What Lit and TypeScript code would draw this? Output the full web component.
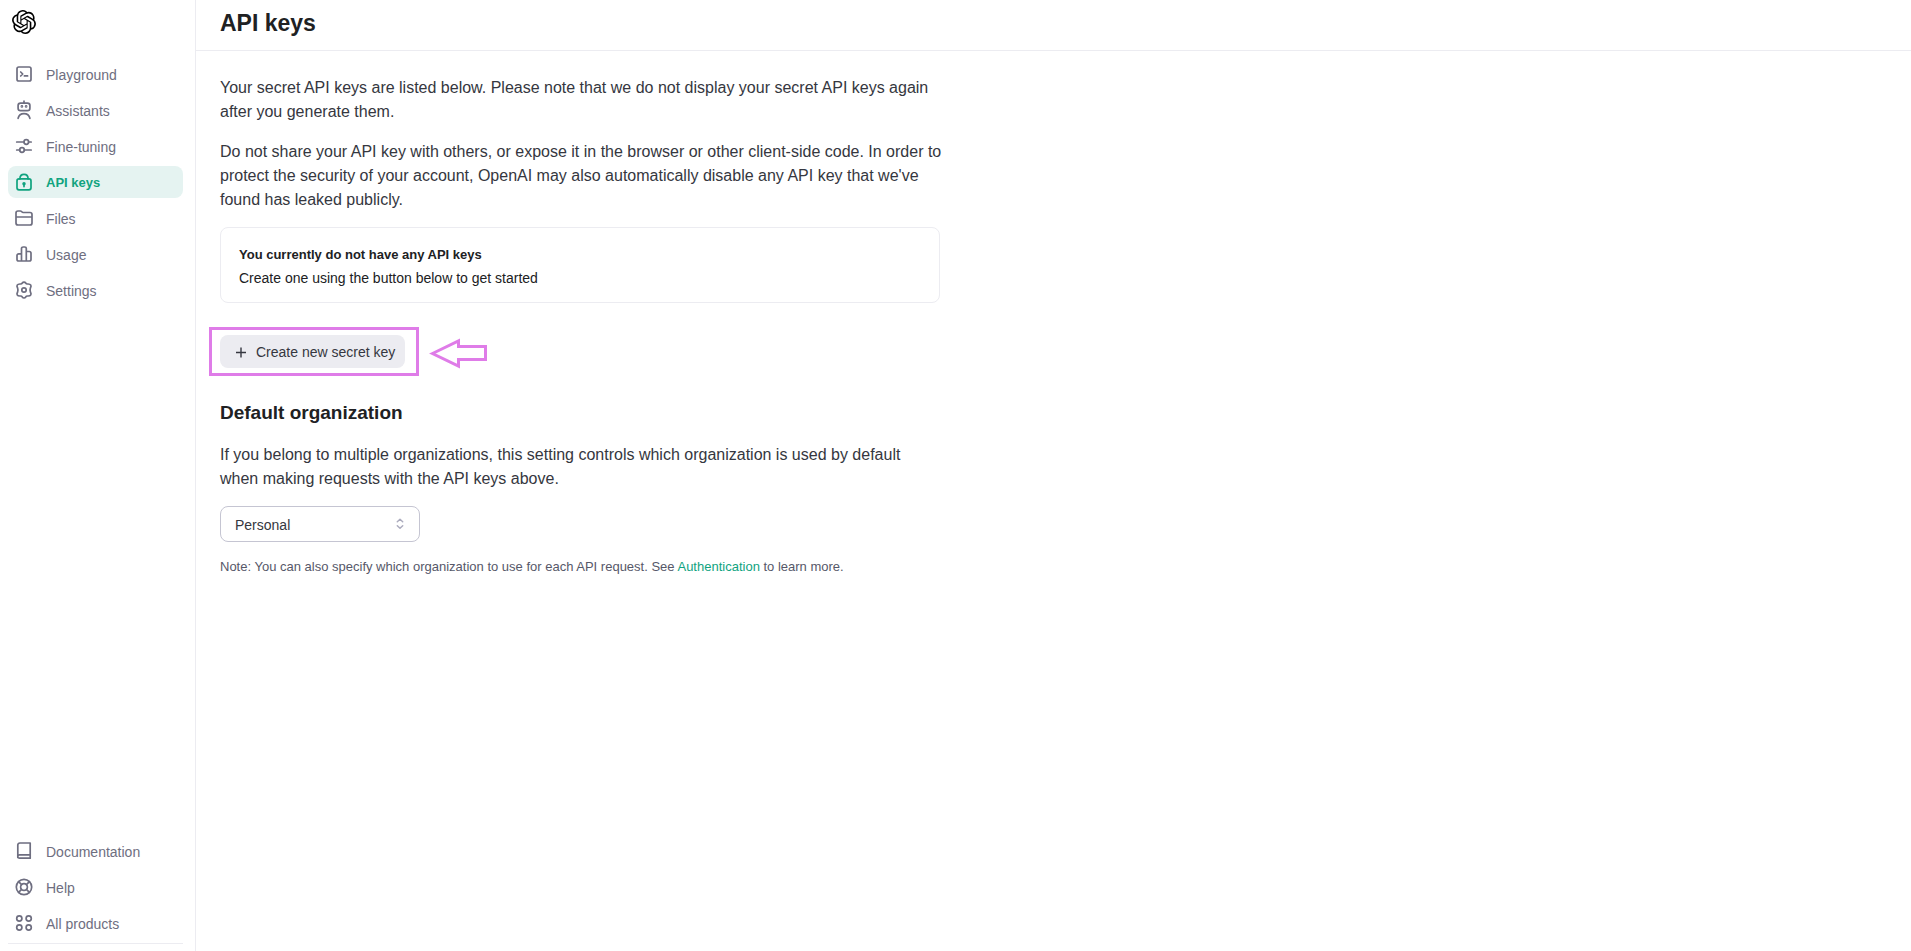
import { LitElement, html, css, svg } from "lit";
import { customElement, state } from "lit/decorators.js";
import { classMap } from "lit/directives/class-map.js";

const LOGO =
  "M22.2819 9.8211a5.9847 5.9847 0 0 0-.5157-4.9108 6.0462 6.0462 0 0 0-6.5098-2.9A6.0651 6.0651 0 0 0 4.9807 4.1818a5.9847 5.9847 0 0 0-3.9977 2.9 6.0462 6.0462 0 0 0 .7427 7.0966 5.98 5.98 0 0 0 .511 4.9107 6.051 6.051 0 0 0 6.5146 2.9001A5.9847 5.9847 0 0 0 13.2599 24a6.0557 6.0557 0 0 0 5.7718-4.2058 5.9894 5.9894 0 0 0 3.9977-2.9001 6.0557 6.0557 0 0 0-.7475-7.0729zm-9.022 12.6081a4.4755 4.4755 0 0 1-2.8764-1.0408l.1419-.0804 4.7783-2.7582a.7948.7948 0 0 0 .3927-.6813v-6.7369l2.02 1.1686a.071.071 0 0 1 .038.052v5.5826a4.504 4.504 0 0 1-4.4945 4.4944zm-9.6607-4.1254a4.4708 4.4708 0 0 1-.5346-3.0137l.142.0852 4.783 2.7582a.7712.7712 0 0 0 .7806 0l5.8428-3.3685v2.3324a.0804.0804 0 0 1-.0332.0615L9.74 19.9502a4.4992 4.4992 0 0 1-6.1408-1.6464zM2.3408 7.8956a4.485 4.485 0 0 1 2.3655-1.9728V11.6a.7664.7664 0 0 0 .3879.6765l5.8144 3.3543-2.0201 1.1685a.0757.0757 0 0 1-.071 0l-4.8303-2.7865A4.504 4.504 0 0 1 2.3408 7.872zm16.5963 3.8558L13.1038 8.364 15.1192 7.2a.0757.0757 0 0 1 .071 0l4.8303 2.7913a4.4944 4.4944 0 0 1-.6765 8.1042v-5.6772a.79.79 0 0 0-.407-.667zm2.0107-3.0231l-.142-.0852-4.7735-2.7818a.7759.7759 0 0 0-.7854 0L9.409 9.2297V6.8974a.0662.0662 0 0 1 .0284-.0615l4.8303-2.7866a4.4992 4.4992 0 0 1 6.6802 4.66zM8.3065 12.863l-2.02-1.1638a.0804.0804 0 0 1-.038-.0567V6.0742a4.4992 4.4992 0 0 1 7.3757-3.4537l-.142.0805L8.704 5.459a.7948.7948 0 0 0-.3927.6813zm1.0976-2.3654l2.602-1.4998 2.6069 1.4998v2.9994l-2.5974 1.4997-2.6067-1.4997Z";

const icons: Record<string, unknown> = {
  playground: svg`<rect x="3" y="3" width="14" height="14" rx="1.8"/><path d="M6.7 8l2 2-2 2M10.4 11.9h3.2"/>`,
  assistants: svg`<rect x="4.1" y="3.1" width="11.8" height="7.6" rx="2.4"/><path d="M10 1.2v1.9M4.1 18.3c.7-2.9 3-4.6 5.9-4.6s5.2 1.7 5.9 4.6"/><circle cx="7.9" cy="6.4" r=".5"/><circle cx="12.1" cy="6.4" r=".5"/>`,
  tuning: svg`<path d="M2.700 6h7.300M14.600 6h2.600M2.700 14h3M10.300 14h6.900"/><circle cx="12.300" cy="6" r="2.300"/><circle cx="8" cy="14" r="2.300"/>`,
  keys: svg`<rect x="3" y="6.900" width="14" height="10.900" rx="2"/><path d="M5.900 6.900c0-2.700 1.600-4.500 4.100-4.500s4.100 1.800 4.100 4.500M10 12v2.600"/><circle cx="10" cy="11.700" r=".9" fill="currentColor"/>`,
  files: svg`<path d="M2 5a2 2 0 0 1 2-2h2.400c1.300 0 1.400 1.500 2.700 1.500H16a2 2 0 0 1 2 2V15a2 2 0 0 1-2 2H4a2 2 0 0 1-2-2zM2 9h16"/>`,
  usage: svg`<path d="M7.500 17V4.600C7.500 3.600 8.300 3 9.200 3h1.400c1 0 1.700.6 1.700 1.600V17zM7.500 9.900H4.700C3.700 9.900 3 10.500 3 11.500v3.900C3 16.400 3.700 17 4.700 17h2.800M12.300 7.500h3c1 0 1.700.7 1.700 1.700v6.200c0 1-.7 1.600-1.700 1.600h-3"/>`,
  settings: svg`<path d="M8.300 3c.8-1.300 2.600-1.300 3.400 0 .4.700 1.100 1.100 1.900 1 1.500-.1 2.700.3 3.200 1.200.5.900.3 1.600-.4 2.800-.5 1.400-.5 2.600 0 4 .7 1.200.9 1.900.4 2.800-.5.900-1.700 1.300-3.200 1.200-.8-.1-1.500.3-1.900 1-.8 1.300-2.600 1.300-3.400 0-.4-.7-1.100-1.100-1.900-1-1.500.1-2.700-.3-3.200-1.200-.5-.9-.3-1.600.4-2.800.5-1.400.5-2.600 0-4-.7-1.200-.9-1.900-.4-2.800.5-.9 1.700-1.300 3.200-1.200.8.1 1.500-.3 1.900-1z"/><circle cx="10" cy="10" r="2.200"/>`,
  docs: svg`<path d="M16.200 13.800V2H5.800a2 2 0 0 0-2 2v12.400M16.200 13.800v3.400H5.500a1.700 1.700 0 0 1-1.700-1.700c0-1 .8-1.700 1.700-1.700z"/>`,
  help: svg`<circle cx="10" cy="10" r="7.700"/><circle cx="10" cy="10" r="3.400"/><path d="M4.600 4.600l3 3M15.400 4.600l-3 3M4.600 15.400l3-3M15.400 15.400l-3-3"/>`,
  products: svg`<circle cx="5.300" cy="5.500" r="2.600"/><circle cx="14.700" cy="5.500" r="2.600"/><circle cx="5.300" cy="14.500" r="2.600"/><circle cx="14.700" cy="14.500" r="2.600"/>`,
};

interface NavEntry {
  icon: string;
  label: string;
}

const primaryNav: NavEntry[] = [
  { icon: "playground", label: "Playground" },
  { icon: "assistants", label: "Assistants" },
  { icon: "tuning", label: "Fine-tuning" },
  { icon: "keys", label: "API keys" },
  { icon: "files", label: "Files" },
  { icon: "usage", label: "Usage" },
  { icon: "settings", label: "Settings" },
];

const secondaryNav: NavEntry[] = [
  { icon: "docs", label: "Documentation" },
  { icon: "help", label: "Help" },
  { icon: "products", label: "All products" },
];

@customElement("side-bar")
class SideBar extends LitElement {
  @state() private active = "API keys";

  static styles = css`
    :host {
      display: flex;
      flex-direction: column;
      box-sizing: border-box;
      width: 196px;
      flex: none;
      padding: 10px 12px 0 8px;
      border-right: 1px solid #ececf1;
    }
    .logo {
      display: block;
      width: 24px;
      height: 24px;
      margin: 0 4px 24px;
      color: #000;
    }
    .logo svg {
      display: block;
    }
    nav {
      display: flex;
      flex-direction: column;
      gap: 4px;
    }
    .spacer {
      flex: 1;
    }
    .item {
      display: flex;
      align-items: center;
      gap: 12px;
      height: 32px;
      padding: 0 6px;
      border-radius: 8px;
      color: #6e6e80;
      font-size: 14px;
      line-height: 20px;
      text-decoration: none;
    }
    .label {
      padding-top: 2px;
    }
    .item.active {
      background: #e5f3f1;
      color: #10a37f;
      font-size: 13px;
      font-weight: 700;
    }
    .icon {
      flex: none;
      fill: none;
      stroke: currentColor;
      stroke-width: 1.7;
      stroke-linecap: round;
      stroke-linejoin: round;
    }
    .account {
      height: 7px;
      margin-top: 4px;
      border-top: 1px solid #ececf1;
    }
  `;

  private renderItem(entry: NavEntry) {
    const active = entry.label === this.active;
    return html`<a
      class=${classMap({ item: true, active })}
      href="#"
      aria-current=${active ? "page" : "false"}
      @click=${(e: Event) => {
        e.preventDefault();
        this.active = entry.label;
      }}
      ><svg class="icon" width="20" height="20" viewBox="0 0 20 20" aria-hidden="true">${icons[entry.icon]}</svg
      ><span class="label">${entry.label}</span></a
    >`;
  }

  render() {
    return html`
      <a class="logo" href="#" aria-label="OpenAI"
        ><svg width="24" height="24" viewBox="0 0 24 24" fill="currentColor"><path d=${LOGO} /></svg
      ></a>
      <nav aria-label="Platform">${primaryNav.map((e) => this.renderItem(e))}</nav>
      <div class="spacer"></div>
      <nav aria-label="Resources">${secondaryNav.map((e) => this.renderItem(e))}</nav>
      <div class="account"></div>
    `;
  }
}

@customElement("app-root")
class AppRoot extends LitElement {
  static styles = css`
    :host {
      display: flex;
      min-height: 100vh;
      background: #fff;
      color: #353740;
      font-family: "Liberation Sans", Arial, sans-serif;
      font-size: 16px;
      line-height: 24px;
    }
    main {
      flex: 1;
      min-width: 0;
    }
    header {
      padding: 9px 24px 13px;
      border-bottom: 1px solid #ececf1;
    }
    h1 {
      margin: 0;
      font-size: 23px;
      line-height: 28px;
      color: #202123;
    }
    .content {
      padding: 25px 24px 24px;
    }
    .intro {
      display: flex;
      flex-direction: column;
      gap: 16px;
      max-width: 728px;
      margin-bottom: 15px;
    }
    p {
      margin: 0;
    }
    .card {
      box-sizing: border-box;
      max-width: 720px;
      padding: 14px 18px 12px;
      border: 1px solid #ececf1;
      border-radius: 8px;
      color: #202123;
      font-size: 14px;
    }
    .card p {
      padding-top: 1px;
      line-height: 23px;
    }
    .card .title {
      font-size: 13px;
      font-weight: 700;
    }
    .create {
      position: relative;
      width: fit-content;
      margin: 32px 0;
    }
    button {
      display: flex;
      align-items: center;
      gap: 6px;
      height: 33px;
      padding: 0 10px 0 12px;
      border: 0;
      border-radius: 8px;
      background: #ececf1;
      color: #353740;
      font: 500 14px/20px "Liberation Sans", Arial, sans-serif;
    }
    .frame {
      position: absolute;
      inset: -8px -14px -8px -11px;
      border: 3px solid #df7ce8;
      pointer-events: none;
    }
    .arrow {
      position: absolute;
      left: calc(100% + 24px);
      top: 3px;
    }
    h2 {
      margin: 0 0 17px;
      font-size: 19px;
      line-height: 26px;
      color: #202123;
    }
    .help {
      max-width: 720px;
      margin-bottom: 15px;
    }
    .picker {
      position: relative;
      width: 200px;
      margin-bottom: 16px;
    }
    select {
      display: block;
      appearance: none;
      width: 100%;
      height: 36px;
      padding: 2px 32px 0 14px;
      border: 1px solid #c5c5d2;
      border-radius: 8px;
      background: #fff;
      color: #353740;
      font: 14px/20px "Liberation Sans", Arial, sans-serif;
    }
    .chevrons {
      position: absolute;
      right: 12px;
      top: 10px;
      pointer-events: none;
    }
    .note {
      font-size: 13px;
      line-height: 18px;
      color: #565869;
    }
    .note a {
      color: #10a37f;
      text-decoration: none;
    }
  `;

  render() {
    return html`
      <side-bar></side-bar>
      <main>
        <header><h1>API keys</h1></header>
        <div class="content">
          <div class="intro">
            <p>
              Your secret API keys are listed below. Please note that we do not display your secret API keys again after
              you generate them.
            </p>
            <p>
              Do not share your API key with others, or expose it in the browser or other client-side code. In order to
              protect the security of your account, OpenAI may also automatically disable any API key that we've found
              has leaked publicly.
            </p>
          </div>
          <section class="card">
            <p class="title">You currently do not have any API keys</p>
            <p>Create one using the button below to get started</p>
          </section>
          <div class="create">
            <button type="button">
              <svg width="18" height="18" viewBox="0 0 18 18" fill="none" stroke="currentColor" stroke-width="1.4" aria-hidden="true">
                <path d="M9 4.500v10M4 9.500h10" />
              </svg>
              Create new secret key
            </button>
            <div class="frame"></div>
            <svg class="arrow" width="60" height="32" viewBox="0 0 60 32" fill="none" stroke="#df7ce8" stroke-width="3" aria-hidden="true">
              <path d="M3.500 15.500L29.500 3v5.500h27v13h-27V28z" />
            </svg>
          </div>
          <h2>Default organization</h2>
          <p class="help" id="org-help">
            If you belong to multiple organizations, this setting controls which organization is used by default when
            making requests with the API keys above.
          </p>
          <div class="picker">
            <select aria-label="Default organization" aria-describedby="org-help">
              <option>Personal</option>
            </select>
            <svg class="chevrons" width="16" height="16" viewBox="0 0 16 16" fill="none" stroke="#acacbe" stroke-width="1.5" stroke-linecap="round" stroke-linejoin="round" aria-hidden="true">
              <path d="M5.300 5.800L8 3.300l2.700 2.500M5.300 9.800L8 12.300l2.700-2.500" />
            </svg>
          </div>
          <p class="note">
            Note: You can also specify which organization to use for each API request. See
            <a href="#">Authentication</a> to learn more.
          </p>
        </div>
      </main>
    `;
  }
}
